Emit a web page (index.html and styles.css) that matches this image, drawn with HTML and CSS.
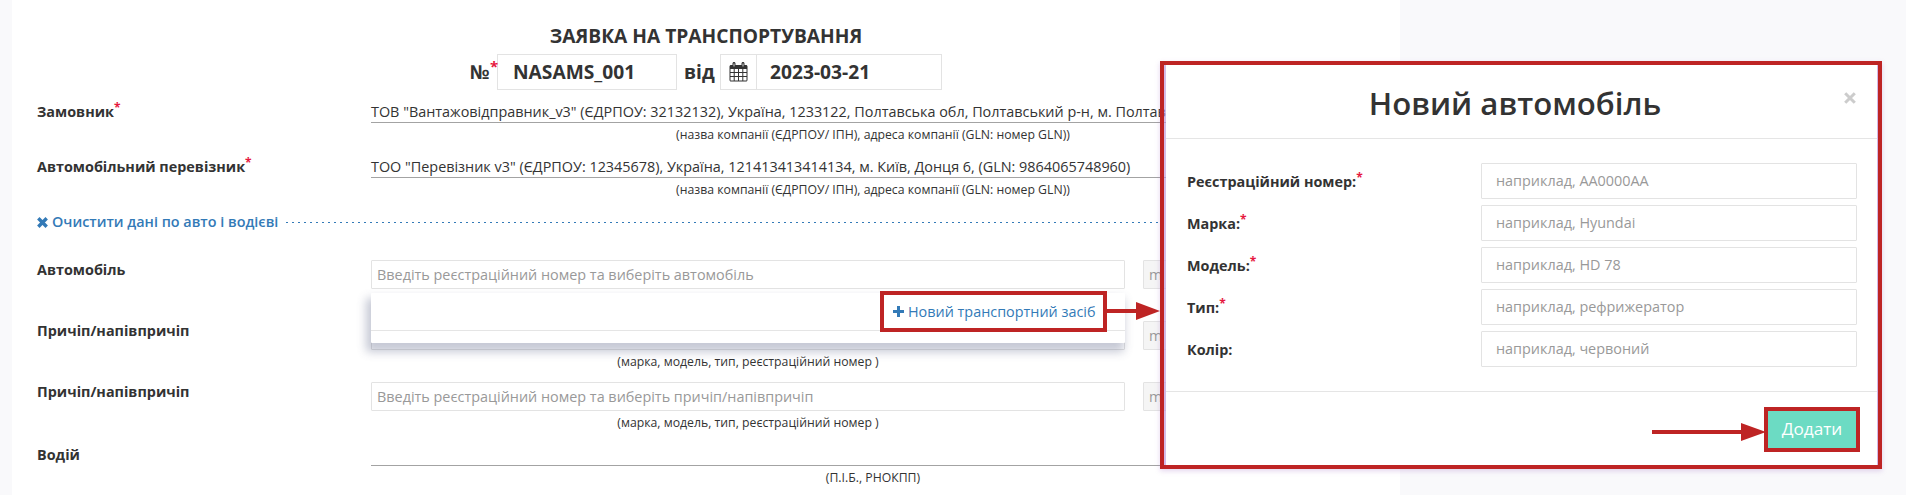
FILE: index.html
```html
<!DOCTYPE html>
<html lang="uk">
<head>
<meta charset="utf-8">
<title>Заявка на транспортування</title>
<link rel="stylesheet" href="styles.css">
</head>
<body>
<main class="sheet">
  <h1 class="doc-title">ЗАЯВКА НА ТРАНСПОРТУВАННЯ</h1>
  <div class="doc-meta">
    <span class="meta-label">№</span><sup class="req req-big">*</sup>
    <div class="meta-input number">NASAMS_001</div>
    <span class="meta-label from">від</span>
    <div class="date-group">
      <span class="addon"><svg width="19" height="20" viewBox="0 0 18 20"><path fill="#333" fill-rule="evenodd" d="M1.500 3H3V1.500C3 .7 3.600 0 4.500 0S6 .7 6 1.500V3h6V1.500C12 .7 12.600 0 13.500 0S15 .7 15 1.500V3h1.500C17.300 3 18 3.700 18 4.500v13.500c0 .8-.7 1.500-1.500 1.500h-15C.7 19.500 0 18.800 0 18V4.500C0 3.700.7 3 1.500 3zM1 7v3h3.200V7zm4.200 0v3h3.300V7zm4.300 0v3h3.300V7zm4.300 0v3H17V7zM1 11v3h3.200v-3zm4.200 0v3h3.300v-3zm4.300 0v3h3.300v-3zm4.300 0v3H17v-3zM1 15v3.500h3.200V15zm4.200 0v3.500h3.300V15zm4.300 0v3.500h3.300V15zm4.300 0v3.500H17V15z"/><path stroke="#fff" stroke-width=".8" d="M4.500 1.500v3M13.500 1.500v3"/></svg></span>
      <div class="meta-input date">2023-03-21</div>
    </div>
  </div>

  <section class="row party">
    <div class="label">Замовник<sup class="req">*</sup></div>
    <div class="field">
      <div class="value">ТОВ "Вантажовідправник_v3" (ЄДРПОУ: 32132132), Україна, 1233122, Полтавська обл, Полтавський р-н, м. Полтава</div>
      <div class="hint">(назва компанії (ЄДРПОУ/ ІПН), адреса компанії (GLN: номер GLN))</div>
    </div>
  </section>
  <section class="row party">
    <div class="label">Автомобільний перевізник<sup class="req">*</sup></div>
    <div class="field">
      <div class="value">ТОО "Перевізник v3" (ЄДРПОУ: 12345678), Україна, 121413413414134, м. Київ, Донця 6, (GLN: 9864065748960)</div>
      <div class="hint">(назва компанії (ЄДРПОУ/ ІПН), адреса компанії (GLN: номер GLN))</div>
    </div>
  </section>

  <div class="clear-row">
    <svg class="times" width="11" height="11" viewBox="0 0 11 11"><path stroke="#337ab7" stroke-width="3.400" d="M1.300 1.300l8.400 8.400M9.700 1.300l-8.400 8.400"/></svg>
    <a class="clear-link">Очистити дані по авто і водієві</a>
    <span class="dashes"></span>
  </div>

  <section class="row vehicle">
    <div class="label">Автомобіль</div>
    <div class="field">
      <div class="pair"><div class="search">Введіть реєстраційний номер та виберіть автомобіль</div><div class="search off">m</div></div>
      <div class="dropdown">
        <div class="dropdown-top"><a class="add-link"><svg width="11" height="11" viewBox="0 0 11 11"><path fill="#337ab7" d="M4 0h3v4h4v3H7v4H4V7H0V4h4z"/></svg>Новий транспортний засіб</a></div>
      </div>
      <svg class="arrow-one" width="54" height="18" viewBox="0 0 54 18"><path fill="#be2424" d="M0 7h30V0l24 9-24 9v-7H0z"/></svg>
    </div>
  </section>
  <section class="row vehicle">
    <div class="label">Причіп/напівпричіп</div>
    <div class="field">
      <div class="pair"><div class="search"></div><div class="search off">m</div></div>
      <div class="hint short">(марка, модель, тип, реєстраційний номер )</div>
    </div>
  </section>
  <section class="row vehicle">
    <div class="label">Причіп/напівпричіп</div>
    <div class="field">
      <div class="pair"><div class="search">Введіть реєстраційний номер та виберіть причіп/напівпричіп</div><div class="search off">m</div></div>
      <div class="hint short">(марка, модель, тип, реєстраційний номер )</div>
    </div>
  </section>
  <section class="row driver">
    <div class="label">Водій</div>
    <div class="field">
      <div class="value"></div>
      <div class="hint">(П.І.Б., РНОКПП)</div>
    </div>
  </section>
</main>

<aside class="frame">
  <div class="modal">
    <header class="modal-head">
      <h2 class="modal-title">Новий автомобіль</h2>
      <svg class="close" width="12" height="12" viewBox="0 0 12 12"><path stroke="#ccc" stroke-width="3" d="M1.200 1.200l9.600 9.600M10.800 1.200l-9.600 9.600"/></svg>
    </header>
    <div class="modal-body">
      <div class="form-row"><span class="form-label">Реєстраційний номер:<sup class="req">*</sup></span><div class="form-input">наприклад, АА0000АА</div></div>
      <div class="form-row"><span class="form-label">Марка:<sup class="req">*</sup></span><div class="form-input">наприклад, Hyundai</div></div>
      <div class="form-row"><span class="form-label">Модель:<sup class="req">*</sup></span><div class="form-input">наприклад, HD 78</div></div>
      <div class="form-row"><span class="form-label">Тип:<sup class="req">*</sup></span><div class="form-input">наприклад, рефрижератор</div></div>
      <div class="form-row"><span class="form-label">Колір:</span><div class="form-input">наприклад, червоний</div></div>
    </div>
    <footer class="modal-foot">
      <svg class="arrow-two" width="114" height="18" viewBox="0 0 114 18"><path fill="#be2424" d="M0 7h89V0l25 9-25 9v-7H0z"/></svg>
      <div class="submit">Додати</div>
    </footer>
  </div>
</aside>
</body>
</html>
```
FILE: styles.css
```css
* { box-sizing: border-box; }
body {
  margin: 0;
  width: 1906px;
  height: 495px;
  overflow: hidden;
  position: relative;
  background: #f9f9fb;
  color: #333;
  font: 14.4px/20px "Open Sans", sans-serif;
}
.sheet {
  width: 1388px;
  height: 495px;
  margin-left: 12px;
  padding: 22px 25px 0;
  background: #fff;
}
.doc-title {
  margin: 0;
  height: 32px;
  text-align: center;
  font-size: 19.2px;
  line-height: 28px;
  font-weight: 700;
}
.doc-meta {
  display: flex;
  height: 36px;
  padding-left: 433px;
  font-size: 19.2px;
  line-height: 36px;
  font-weight: 700;
}
.meta-label { width: 20px; }
.meta-label.from { width: 43px; padding-left: 7px; }
.req {
  color: #e6193f;
  font-size: 12px;
  line-height: 0;
  font-weight: 700;
  vertical-align: baseline;
  position: relative;
  top: -5px;
}
.req-big { width: 7px; font-size: 15px; line-height: 28px; top: -2px; }
.meta-input { border: 1px solid #e3e3e3; line-height: 34px; }
.number { width: 180px; padding-left: 15px; }
.date-group { display: flex; }
.addon {
  width: 37px;
  display: flex;
  align-items: center;
  justify-content: center;
  border: 1px solid #e3e3e3;
}
.date { width: 186px; margin-left: -1px; padding-left: 13px; }
.row { display: flex; }
.label { width: 334px; font-weight: 700; }
.field { flex: 1; position: relative; }
.party { height: 55px; }
.party:nth-of-type(1) { margin-top: 12px; }
.value {
  height: 21px;
  line-height: 20px;
  border-bottom: 1px solid #a3a3a3;
  white-space: nowrap;
}
.hint { font-size: 12.25px; line-height: 18px; text-align: center; padding-top: 3px; }
.clear-row { display: flex; align-items: center; height: 20px; color: #337ab7; }
.clear-link { margin-left: 4px; width: 234px; font-weight: 600; white-space: nowrap; }
.dashes {
  flex: 1;
  height: 1px;
  background: repeating-linear-gradient(90deg, #337ab7 0 2px, transparent 2px 6px);
}
.vehicle { height: 61px; }
.clear-row + .vehicle { margin-top: 28px; }
.pair { display: flex; gap: 18px; }
.search {
  width: 754px;
  height: 29px;
  padding-left: 5px;
  border: 1px solid #e3e3e3;
  border-radius: 1px;
  color: #999;
  line-height: 28px;
}
.search.off { width: 232px; background: #f5f5f5; }
.short { width: 754px; }
.dropdown {
  position: absolute;
  left: 0;
  top: 33px;
  z-index: 2;
  width: 754px;
  height: 50px;
  background: #fff;
  border-radius: 1px;
  box-shadow: -3px 7px 10px 2px rgba(65, 75, 115, .3);
}
.dropdown-top { height: 38px; border-bottom: 1px solid #e5e5e5; }
.add-link {
  position: absolute;
  left: 509px;
  top: -2px;
  width: 227px;
  height: 41px;
  display: flex;
  align-items: center;
  gap: 4px;
  padding-left: 9px;
  border: 4px solid #be2424;
  color: #337ab7;
  white-space: nowrap;
}
.arrow-one { position: absolute; left: 735px; top: 42px; z-index: 3; }
.driver .label { padding-top: 2px; }
.driver .value { height: 23px; }
.frame {
  position: absolute;
  left: 1160px;
  top: 61px;
  z-index: 5;
  width: 722px;
  height: 408px;
  padding: 0 1px 0 2px;
  border: 4px solid #be2424;
  background: rgba(190, 150, 220, .65);
  background-clip: padding-box;
  box-shadow: 0 2px 5px rgba(150, 90, 190, .25);
}
.modal { height: 400px; background: #fff; }
.modal-head { position: relative; height: 74px; border-bottom: 1px solid #e5e5e5; }
.modal-title {
  margin: 0;
  padding: 18px 13px 0 0;
  text-align: center;
  font-size: 31.2px;
  line-height: 40px;
  font-weight: 600;
}
.close { position: absolute; right: 21px; top: 27px; }
.modal-body { height: 253px; padding: 24px 20px 0 21px; border-bottom: 1px solid #e5e5e5; }
.form-row { display: flex; height: 36px; margin-bottom: 6px; }
.form-label { width: 294px; line-height: 37px; font-weight: 700; }
.form-input {
  flex: 1;
  height: 36px;
  padding-left: 14px;
  border: 1px solid #e3e3e3;
  border-radius: 1px;
  color: #999;
  line-height: 34px;
}
.modal-foot { display: flex; justify-content: flex-end; padding: 15px 17px 0 0; }
.arrow-two { margin: 16px -2px 0 0; }
.submit {
  width: 96px;
  height: 45px;
  border: 4px solid #be2424;
  background: #6cdbc3;
  color: #fff;
  font-size: 17.2px;
  line-height: 36px;
  text-align: center;
}
```
